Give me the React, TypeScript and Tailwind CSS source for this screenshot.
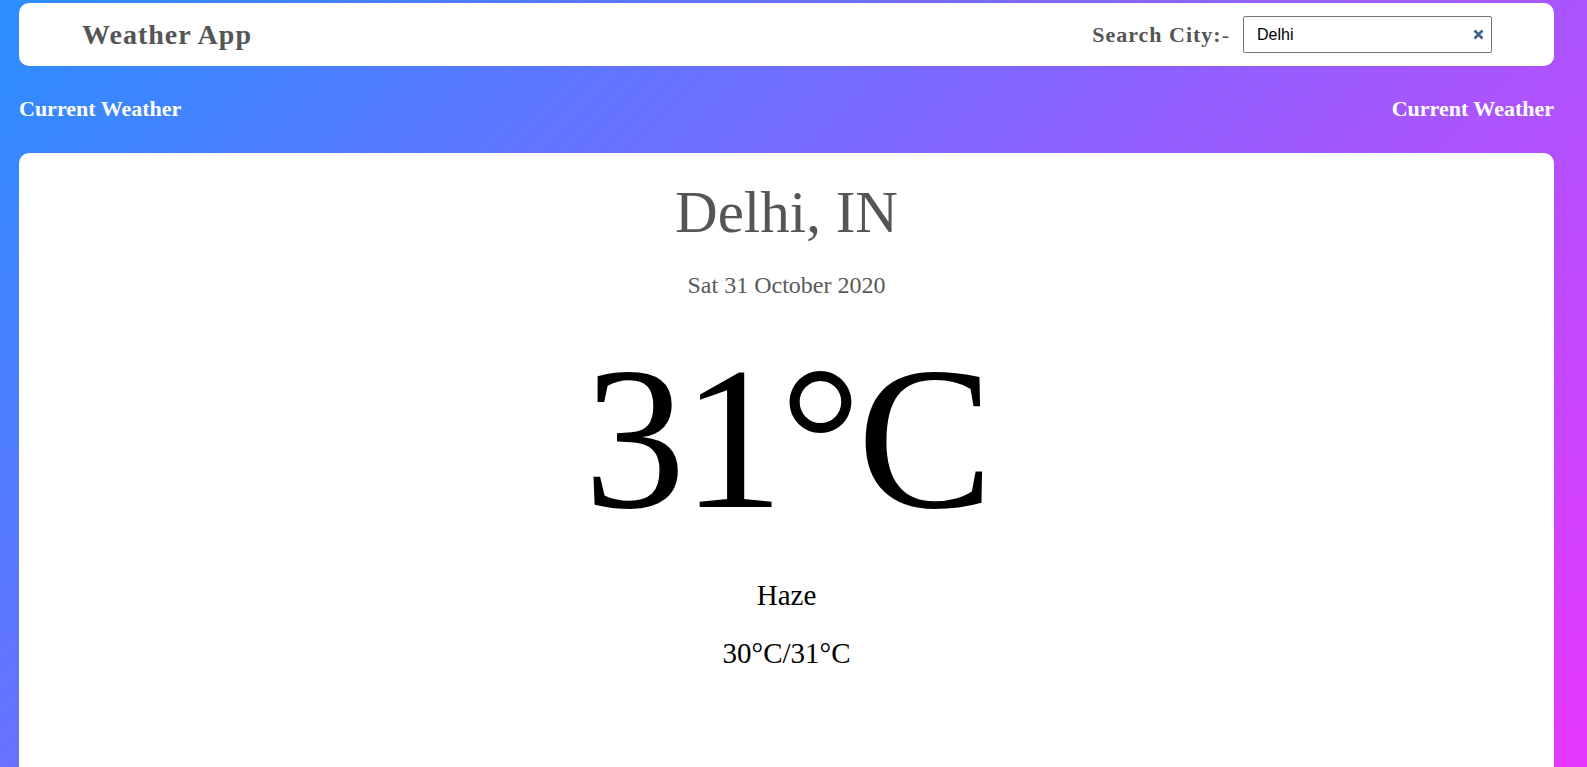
import React from "react";

export default function App() {
  return (
    <div className="h-screen w-full overflow-hidden bg-[linear-gradient(135deg,#2a8eff,#e838ff)] flex flex-col pt-[3px] pl-[19px] pr-[33px] font-['Liberation_Serif',serif]">
      <header className="h-[63px] shrink-0 bg-white rounded-[10px] flex items-center justify-between pl-[63px] pr-[62px]">
        <h1 className="text-[28px] leading-none font-bold tracking-[1px] text-[#555]">Weather App</h1>
        <div className="flex items-center">
          <span className="text-[22px] leading-none font-bold tracking-[1px] text-[#555]">
            Search City:<span className="font-normal">-</span>
          </span>
          <div className="ml-[13px] w-[249px] h-[37px] border border-[#767676] rounded-[2px] flex items-center pl-[13px] pr-[6px]">
            <span className="flex-1 text-[16px] leading-none text-black font-['Liberation_Sans',sans-serif]">Delhi</span>
            <svg width="11" height="11" viewBox="0 0 11 11" className="mr-[1px]">
              <path d="M1.5 1.5 L9.5 9.5 M9.5 1.5 L1.5 9.5" stroke="#41618f" strokeWidth="2.6" strokeLinecap="butt" />
            </svg>
          </div>
        </div>
      </header>
      <div className="mt-[31.6px] flex justify-between shrink-0">
        <h2 className="text-[22px] leading-[22px] font-bold text-white">Current Weather</h2>
        <h2 className="text-[22px] leading-[22px] font-bold text-white">Current Weather</h2>
      </div>
      <main className="mt-[33.4px] h-[700px] shrink-0 bg-white rounded-[10px] flex flex-col items-center pt-[29.6px]">
        <div className="text-[59px] leading-[59px] text-[#555]">Delhi, IN</div>
        <div className="mt-[31.4px] text-[24px] leading-[24px] text-[#5a5a5a]">Sat 31 October 2020</div>
        <div className="mt-[39.1px] text-[204px] leading-[204px] tracking-[-4px] text-black">31°C</div>
        <div className="mt-[40.6px] text-[29px] leading-[29px] text-black">Haze</div>
        <div className="mt-[29px] text-[29px] leading-[29px] text-black">30°C/31°C</div>
      </main>
    </div>
  );
}
